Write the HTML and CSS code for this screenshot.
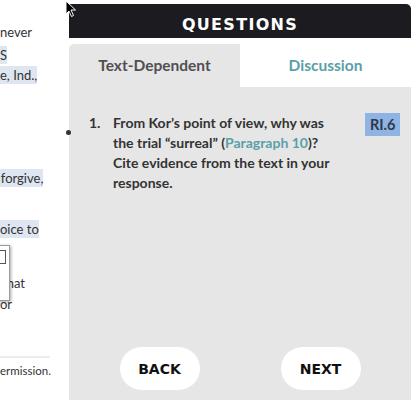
FILE: index.html
```html
<!DOCTYPE html>
<html>
<head>
<meta charset="utf-8">
<link rel="stylesheet" href="styles.css">
</head>
<body>
<div class="page">
  <div class="reader">
    <p class="ln l1">never</p>
    <p class="ln l2"><span class="hl">S</span></p>
    <p class="ln l3"><span class="hl">e, Ind.,</span></p>
    <p class="ln l4"><span class="hl">&#8202;forgive,</span></p>
    <p class="ln l5"><span class="hl">oice to</span></p>
    <div class="popup"><span class="popbox"></span></div>
    <p class="ln l6">&nbsp;&nbsp;hat</p>
    <p class="ln l7">or</p>
    <hr class="rule">
    <p class="ln l8">ermission.</p>
  </div>
  <div class="panel">
    <div class="header">QUESTIONS</div>
    <div class="tabs">
      <div class="tab active">Text-Dependent</div>
      <div class="tab">Discussion</div>
    </div>
    <div class="content">
      <div class="question">
        <span class="dot"></span>
        <span class="num">1.</span>
        <p class="qtext">From Kor’s point of view, why was the trial “surreal” (<span class="link">Paragraph 10</span>)? Cite evidence from the text in your response.</p>
        <span class="badge">RI.6</span>
      </div>
      <div class="nav">
        <button class="btn">BACK</button>
        <button class="btn">NEXT</button>
      </div>
    </div>
  </div>
</div>
<svg class="cursor" width="12" height="18" viewBox="0 0 12 18"><path d="M1 1 L1 14 L4 11 L6.5 16.5 L8.5 15.5 L6 10 L10.5 10 Z" fill="#000" stroke="#fff" stroke-width="1"/></svg>
</body>
</html>
```
FILE: styles.css
```css
html, body {
  margin: 0;
  padding: 0;
  background: #fff;
}
body {
  width: 419px;
  height: 407px;
  overflow: hidden;
  position: relative;
  font-family: Lato, "Open Sans", sans-serif;
}
.page {
  display: flex;
  height: 407px;
}
.reader {
  width: 69px;
  flex: none;
  position: relative;
  overflow: hidden;
  color: #333;
  font-size: 13px;
}
.ln {
  margin: 0;
  white-space: nowrap;
  line-height: 18px;
}
.hl {
  background: #dee6f1;
  padding: 1px 0;
}
.l1 { margin-top: 23px; }
.l2 { margin-top: 5px; }
.l3 { margin-top: 2px; }
.l4 { margin-top: 85px; }
.l5 { margin-top: 33px; }
.l6 { margin-top: 36px; }
.l7 { margin-top: 3px; }
.popup {
  position: absolute;
  left: -4px;
  top: 245px;
  width: 12px;
  height: 54px;
  background: #fff;
  border: 1px solid #9a9a9a;
  box-shadow: 1px 1px 3px rgba(0,0,0,0.35);
}
.popbox {
  position: absolute;
  left: 1px;
  top: 4px;
  width: 6px;
  height: 12px;
  border: 1px solid #555;
}
.rule {
  margin: 43px 0 0 0;
  width: 50px;
  height: 2px;
  border: 0;
  background: #ececec;
}
.l8 {
  margin-top: 4px;
  font-size: 11.5px;
}

.panel {
  width: 342px;
  flex: none;
  display: flex;
  flex-direction: column;
  padding-top: 4px;
  height: 396px;
}
.header {
  height: 34px;
  background: #1c1b20;
  border-top-right-radius: 5px;
  color: #fff;
  font-family: "DejaVu Sans", sans-serif;
  font-weight: bold;
  font-size: 16px;
  letter-spacing: 1.3px;
  display: flex;
  align-items: center;
  justify-content: center;
  padding-top: 7px;
  box-sizing: border-box;
}
.tabs {
  display: flex;
  margin-top: 6px;
  height: 43px;
}
.tab {
  flex: 1;
  display: flex;
  align-items: center;
  justify-content: center;
  font-weight: bold;
  font-size: 15.5px;
  color: #5aa0a7;
  padding-bottom: 2px;
}
.tab.active {
  background: #e6e6e6;
  color: #505050;
  border-top-left-radius: 5px;
}
.content {
  flex: 1;
  background: #e6e6e6;
  display: flex;
  flex-direction: column;
  justify-content: space-between;
  padding: 26px 0 10px 0;
}
.question {
  display: flex;
  align-items: flex-start;
}
.dot {
  width: 5px;
  height: 5px;
  border-radius: 50%;
  background: #333;
  margin: 17px 0 0 -3px;
  flex: none;
}
.num {
  font-weight: bold;
  font-size: 14px;
  color: #333;
  line-height: 20px;
  margin-left: 18px;
  width: 24px;
  flex: none;
}
.qtext {
  margin: 0;
  width: 218px;
  font-weight: bold;
  font-size: 14px;
  line-height: 20px;
  color: #333;
}
.link {
  color: #5aa0a7;
}
.badge {
  margin: 0 0 0 34px;
  background: #8fb3e2;
  color: #2c3a4c;
  font-weight: bold;
  font-size: 14.5px;
  padding: 3px 5px;
  line-height: 17px;
}
.nav {
  display: flex;
  justify-content: center;
  gap: 81px;
}
.btn {
  width: 80px;
  height: 43px;
  border: 0;
  border-radius: 22px;
  background: #fff;
  color: #111;
  font-family: "DejaVu Sans", sans-serif;
  font-weight: bold;
  font-size: 14px;
  padding: 0;
}
.cursor {
  position: absolute;
  left: 65px;
  top: 0;
}
```
